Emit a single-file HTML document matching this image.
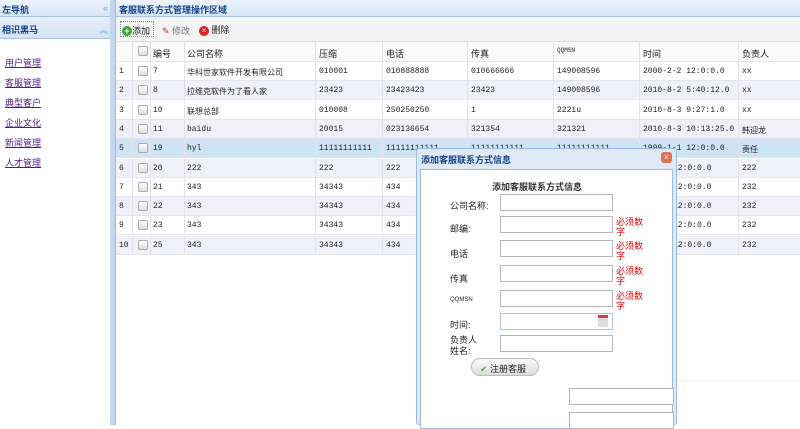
<!DOCTYPE html>
<html><head><meta charset="utf-8"><style>
*{margin:0;padding:0;box-sizing:border-box}
body{width:800px;height:425px;overflow:hidden;background:#fff;font-family:"Liberation Sans","Noto Sans CJK SC",sans-serif;font-size:9px;color:#222;position:relative}
.abs{position:absolute}
.lh{left:0;top:0;width:110px;height:17px;background:linear-gradient(#eef4fc,#d6e5f7);border-bottom:1px solid #a9c3e6;font-weight:bold;color:#15428b;padding:3px 2px}
.lh2{left:0;top:17px;width:110px;height:22px;background:linear-gradient(#e8f0fb,#d3e2f5);border-bottom:1px solid #a9c3e6;font-weight:bold;color:#15428b;padding:6px 2px}
.nav a{display:block;color:#551a8b;text-decoration:underline;font-size:9px;position:absolute;left:5px}
.mb{left:110px;top:0;width:6px;height:425px;background:#c3d7f0;border-right:1px solid #99bbe8}
.mh{left:116px;top:0;width:684px;height:17px;background:linear-gradient(#eef4fc,#d6e5f7);border-bottom:1px solid #a9c3e6;font-weight:bold;color:#15428b;padding:3px 3px}
.tb{left:116px;top:17px;width:684px;height:25px;background:#f3f3f3;border-bottom:1px solid #ddd}
.row{position:absolute;left:116px;width:684px;height:19px;border-bottom:1px solid #e4e4ee}
.row span{position:absolute;top:5px;font-family:"Liberation Mono","Noto Sans CJK SC",monospace;font-size:8px;white-space:nowrap}
.row i{position:absolute;top:0;width:1px;height:19px;background:#e2e2e8}
.cb{position:absolute;left:22px;top:4px;width:10px;height:10px;border:1px solid #aaa;border-radius:2px;background:linear-gradient(#fff,#ddd)}
.dlg{left:416px;top:148px;width:261px;height:277px;background:#dfe9f7;border:1px solid #99bbe8;border-radius:3px}
.dt{position:absolute;left:4px;top:4px;color:#15428b;font-weight:bold;font-size:9px}
.db{position:absolute;left:3px;top:20px;width:253px;height:260px;background:#fff;border:1px solid #99bbe8}
.lbl{position:absolute;font-size:9px;color:#222}
.inp{position:absolute;width:113px;height:17px;border:1px solid #b5b5b5;background:#fff}
.req{position:absolute;color:#e00;font-size:9px;line-height:10px;width:30px}
</style></head><body>
<div class="abs lh">左导航<span style="float:right;color:#7a9ccc;font-weight:normal">«</span></div>
<div class="abs lh2">相识黑马<span style="float:right;color:#7a9ccc;font-weight:normal">︽</span></div>
<div class="nav">
<a style="top:56px">用户管理</a><a style="top:76px">客服管理</a><a style="top:96px">典型客户</a><a style="top:116px">企业文化</a><a style="top:136px">新闻管理</a><a style="top:156px">人才管理</a>
</div>
<div class="abs mb"></div>
<div class="abs mh">客服联系方式管理操作区域</div>
<div class="abs tb">
<div class="abs" style="left:4px;top:4px;width:34px;height:16px;border:1px dotted #88a;padding:2px 1px;font-size:9px"><span style="display:inline-block;width:10px;height:10px;border-radius:50%;background:#3a3;color:#fff;font-size:9px;line-height:10px;text-align:center;font-weight:bold">+</span>添加</div>
<div class="abs" style="left:46px;top:7px;font-size:9px;color:#777"><span style="color:#c33">✎</span> 修改</div>
<div class="abs" style="left:83px;top:6px;font-size:9px"><span style="display:inline-block;width:10px;height:10px;border-radius:50%;background:#d22;color:#fff;font-size:8px;line-height:10px;text-align:center">×</span> 删除</div>
</div>
<div class="row" style="top:42px;height:20px;background:#fafafa"><i style="left:16px"></i><i style="left:34px"></i><i style="left:68px"></i><i style="left:199px"></i><i style="left:266px"></i><i style="left:351px"></i><i style="left:437px"></i><i style="left:523px"></i><i style="left:622px"></i><div class="cb"></div>
<span style="left:37px;font-family:'Liberation Sans','Noto Sans CJK SC';font-size:9px">编号</span><span style="left:71px;font-family:'Liberation Sans','Noto Sans CJK SC';font-size:9px">公司名称</span><span style="left:203px;font-family:'Liberation Sans','Noto Sans CJK SC';font-size:9px">压缩</span><span style="left:270px;font-family:'Liberation Sans','Noto Sans CJK SC';font-size:9px">电话</span><span style="left:355px;font-family:'Liberation Sans','Noto Sans CJK SC';font-size:9px">传真</span><span style="left:441px;font-size:6px">QQMSN</span><span style="left:527px;font-family:'Liberation Sans','Noto Sans CJK SC';font-size:9px">时间</span><span style="left:626px;font-family:'Liberation Sans','Noto Sans CJK SC';font-size:9px">负责人</span></div>

<div id="rows"></div>
<script>
var d=[["1","7","华科世家软件开发有限公司","010001","010888888","010666666","149008596","2000-2-2 12:0:0.0","xx"],
["2","8","拉维克软件为了看人家","23423","23423423","23423","149008596","2010-8-2 5:40:12.0","xx"],
["3","10","联想总部","010008","250250250","1","222iu","2010-8-3 9:27:1.0","xx"],
["4","11","baidu","20015","023136654","321354","321321","2010-8-3 10:13:25.0","韩迎龙"],
["5","19","hyl","11111111111","11111111111","11111111111","11111111111","1999-1-1 12:0:0.0","责任"],
["6","20","222","222","222","","","12:0:0.0","222"],
["7","21","343","34343","434","","","12:0:0.0","232"],
["8","22","343","34343","434","","","12:0:0.0","232"],
["9","23","343","34343","434","","","12:0:0.0","232"],
["10","25","343","34343","434","","","12:0:0.0","232"]];
var L=[3,37,71,203,270,355,441,527,626],h="";
d.forEach(function(r,k){var bg=k==4?"#cde4f4":(k%2?"#f0f0fb":"#fff");
h+='<div class="row" style="top:'+(62+k*19.3)+'px;background:'+bg+'"><i style="left:16px"></i><i style="left:34px"></i><i style="left:68px"></i><i style="left:199px"></i><i style="left:266px"></i><i style="left:351px"></i><i style="left:437px"></i><i style="left:523px"></i><i style="left:622px"></i><div class="cb"></div>';
r.forEach(function(c,j){var x=L[j];if(j==7&&k>=5)x=527+30;h+='<span style="left:'+x+'px">'+c+'</span>';});
h+='</div>';});
document.getElementById("rows").innerHTML=h;
</script>
<div class="abs" style="left:600px;top:380px;width:200px;height:1px;background:#eee"></div>
<div class="abs dlg">
<div class="dt">添加客服联系方式信息</div>
<div class="abs" style="left:244px;top:3px;width:11px;height:11px;border-radius:3px;background:#e07050;color:#fff;font-size:9px;line-height:11px;text-align:center">×</div>
<div class="db">
<div class="lbl" style="left:71px;top:10px;font-weight:bold;color:#333">添加客服联系方式信息</div>
<div class="lbl" style="left:29px;top:29px">公司名称:</div><div class="inp" style="left:79px;top:24px"></div>
<div class="lbl" style="left:29px;top:52px">邮编:</div><div class="inp" style="left:79px;top:46px"></div><div class="req" style="left:195px;top:47px">必须数字</div>
<div class="lbl" style="left:29px;top:77px">电话</div><div class="inp" style="left:79px;top:70px"></div><div class="req" style="left:195px;top:71px">必须数字</div>
<div class="lbl" style="left:29px;top:102px">传真</div><div class="inp" style="left:79px;top:95px"></div><div class="req" style="left:195px;top:96px">必须数字</div>
<div class="lbl" style="left:29px;top:127px;font-size:6px">QQMSN</div><div class="inp" style="left:79px;top:120px"></div><div class="req" style="left:195px;top:121px">必须数字</div>
<div class="lbl" style="left:29px;top:148px">时间:</div><div class="inp" style="left:79px;top:143px;border-color:#a9c3e6"></div><div class="abs" style="left:177px;top:145px;width:10px;height:12px;background:#ddd;border-top:3px solid #c44"></div>
<div class="lbl" style="left:29px;top:165px;width:30px;line-height:11px">负责人姓名:</div><div class="inp" style="left:79px;top:165px"></div>
<div class="abs" style="left:50px;top:188px;width:68px;height:18px;border-radius:9px;background:linear-gradient(#fafafa,#ddd);border:1px solid #bbb;font-size:9px;padding:3px 8px"><span style="color:#4a4">✔</span> 注册客服</div>
<div class="inp" style="left:148px;top:218px;width:105px"></div>
<div class="inp" style="left:148px;top:242px;width:105px"></div>
</div>
</div>
</body></html>
